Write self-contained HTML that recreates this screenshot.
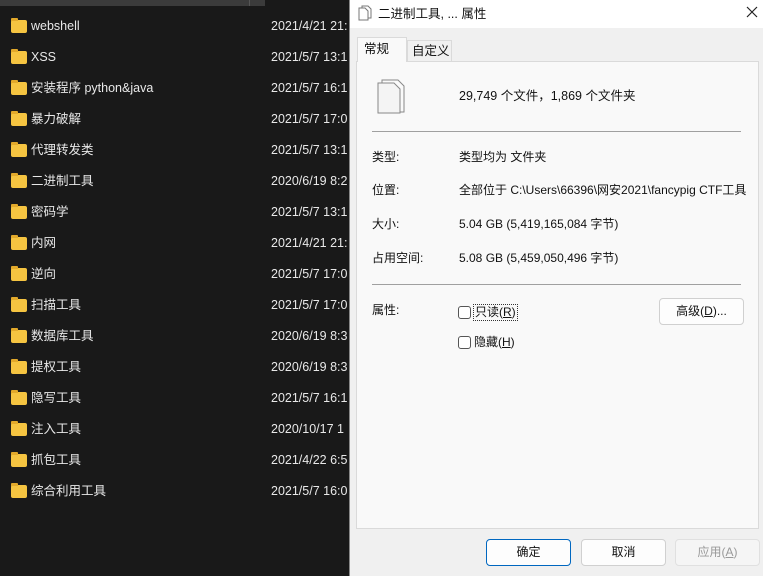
<!DOCTYPE html>
<html><head><meta charset="utf-8"><style>
*{margin:0;padding:0;box-sizing:border-box}
body{width:763px;height:576px;overflow:hidden;background:#191919;font-family:"Liberation Sans","Noto Sans CJK SC",sans-serif;font-size:12px;line-height:16px;position:relative}
.a{position:absolute;white-space:nowrap;line-height:16px}
.row{position:absolute;left:0;width:349px;height:20px;color:#e8e8e8;font-size:12.5px}
.row .f{position:absolute;left:11px;top:4px;width:16px;height:13px;background:#f5c441;border-radius:2px}
.row .f:before{content:"";position:absolute;left:0;top:-2px;width:7px;height:3px;background:#e2a92b;border-radius:1px 1px 0 0}
.row .n{position:absolute;left:31px;top:2px;line-height:16px}
.row .d{position:absolute;left:271px;top:2px;line-height:16px}
.btn{position:absolute;height:27px;width:85px;border:1px solid #d0d0d0;border-radius:4px;background:#fdfdfd;text-align:center;line-height:25px;font-size:12px;color:#111}
</style></head><body>
<div class="a" style="left:0;top:0;width:265px;height:6px;background:#3b3b3b"></div>
<div class="a" style="left:249px;top:0;width:1px;height:6px;background:#555"></div>

<div class="row" style="top:16px"><div class="f"></div><span class="n">webshell</span><span class="d">2021/4/21 21:</span></div>
<div class="row" style="top:47px"><div class="f"></div><span class="n">XSS</span><span class="d">2021/5/7 13:1</span></div>
<div class="row" style="top:78px"><div class="f"></div><span class="n">安装程序 python&amp;java</span><span class="d">2021/5/7 16:1</span></div>
<div class="row" style="top:109px"><div class="f"></div><span class="n">暴力破解</span><span class="d">2021/5/7 17:0</span></div>
<div class="row" style="top:140px"><div class="f"></div><span class="n">代理转发类</span><span class="d">2021/5/7 13:1</span></div>
<div class="row" style="top:171px"><div class="f"></div><span class="n">二进制工具</span><span class="d">2020/6/19 8:2</span></div>
<div class="row" style="top:202px"><div class="f"></div><span class="n">密码学</span><span class="d">2021/5/7 13:1</span></div>
<div class="row" style="top:233px"><div class="f"></div><span class="n">内网</span><span class="d">2021/4/21 21:</span></div>
<div class="row" style="top:264px"><div class="f"></div><span class="n">逆向</span><span class="d">2021/5/7 17:0</span></div>
<div class="row" style="top:295px"><div class="f"></div><span class="n">扫描工具</span><span class="d">2021/5/7 17:0</span></div>
<div class="row" style="top:326px"><div class="f"></div><span class="n">数据库工具</span><span class="d">2020/6/19 8:3</span></div>
<div class="row" style="top:357px"><div class="f"></div><span class="n">提权工具</span><span class="d">2020/6/19 8:3</span></div>
<div class="row" style="top:388px"><div class="f"></div><span class="n">隐写工具</span><span class="d">2021/5/7 16:1</span></div>
<div class="row" style="top:419px"><div class="f"></div><span class="n">注入工具</span><span class="d">2020/10/17 1</span></div>
<div class="row" style="top:450px"><div class="f"></div><span class="n">抓包工具</span><span class="d">2021/4/22 6:5</span></div>
<div class="row" style="top:481px"><div class="f"></div><span class="n">综合利用工具</span><span class="d">2021/5/7 16:0</span></div>

<div class="a" style="left:349px;top:0;width:414px;height:576px;background:#f0f0f0;border-left:1px solid #888"></div>
<div class="a" style="left:350px;top:0;width:413px;height:28px;background:#fff"></div>
<svg class="a" style="left:358px;top:5px" width="14" height="16" viewBox="0 0 14 16"><path d="M4 1h6l3 3v9H4z" fill="#fff" stroke="#777"/><path d="M1 3h6l3 3v9H1z" fill="#fff" stroke="#777"/></svg>
<div class="a" style="left:378px;top:6px;font-size:12.5px;color:#111">二进制工具, ... 属性</div>
<svg class="a" style="left:746px;top:6px" width="12" height="12" viewBox="0 0 12 12"><path d="M1 1L11 11M11 1L1 11" stroke="#222" stroke-width="1.2"/></svg>

<div class="a" style="left:356px;top:61px;width:403px;height:468px;background:#f9f9f9;border:1px solid #dadada"></div>
<div class="a" style="left:357px;top:37px;width:50px;height:25px;background:#f9f9f9;border:1px solid #dadada;border-bottom:none"></div>
<div class="a" style="left:364px;top:41px;font-size:12.5px;color:#111">常规</div>
<div class="a" style="left:407px;top:40px;width:45px;height:21px;background:#f0f0f0;border:1px solid #dadada;border-bottom:none"></div>
<div class="a" style="left:412px;top:43px;font-size:12.5px;color:#111">自定义</div>

<svg class="a" style="left:377px;top:79px" width="30" height="35" viewBox="0 0 30 35"><path d="M5 1h16l6 6v26H5z" fill="#fafafa" stroke="#888"/><path d="M1 4h16l6 6v24H1z" fill="#f4f4f4" stroke="#888"/></svg>
<div class="a" style="left:459px;top:88px;font-size:12.5px;color:#111">29,749 个文件，1,869 个文件夹</div>
<div class="a" style="left:372px;top:131px;width:369px;height:1px;background:#a0a0a0"></div>

<div class="a" style="left:372px;top:149px;color:#111">类型:</div><div class="a" style="left:459px;top:149px;color:#111">类型均为 文件夹</div>
<div class="a" style="left:372px;top:182px;color:#111">位置:</div><div class="a" style="left:459px;top:182px;color:#111;width:287px;overflow:hidden">全部位于 C:\Users\66396\网安2021\fancypig CTF工具</div>
<div class="a" style="left:372px;top:216px;color:#111">大小:</div><div class="a" style="left:459px;top:216px;color:#111">5.04 GB (5,419,165,084 字节)</div>
<div class="a" style="left:372px;top:250px;color:#111">占用空间:</div><div class="a" style="left:459px;top:250px;color:#111">5.08 GB (5,459,050,496 字节)</div>
<div class="a" style="left:372px;top:284px;width:369px;height:1px;background:#a0a0a0"></div>

<div class="a" style="left:372px;top:302px;color:#111">属性:</div>
<div class="a" style="left:458px;top:306px;width:13px;height:13px;border:1px solid #555;border-radius:3px;background:#fff"></div>
<div class="a" style="left:473px;top:304px;color:#111;border:1px dotted #333;padding:0 1px;line-height:15px">只读(<u>R</u>)</div>
<div class="a" style="left:458px;top:336px;width:13px;height:13px;border:1px solid #555;border-radius:3px;background:#fff"></div>
<div class="a" style="left:474px;top:334px;color:#111">隐藏(<u>H</u>)</div>
<div class="btn" style="left:659px;top:298px">高级(<u>D</u>)...</div>

<div class="btn" style="left:486px;top:539px;border-color:#0067c0">确定</div>
<div class="btn" style="left:581px;top:539px">取消</div>
<div class="btn" style="left:675px;top:539px;color:#999;background:#f5f5f5;border-color:#e0e0e0">应用(<u>A</u>)</div>
</body></html>
